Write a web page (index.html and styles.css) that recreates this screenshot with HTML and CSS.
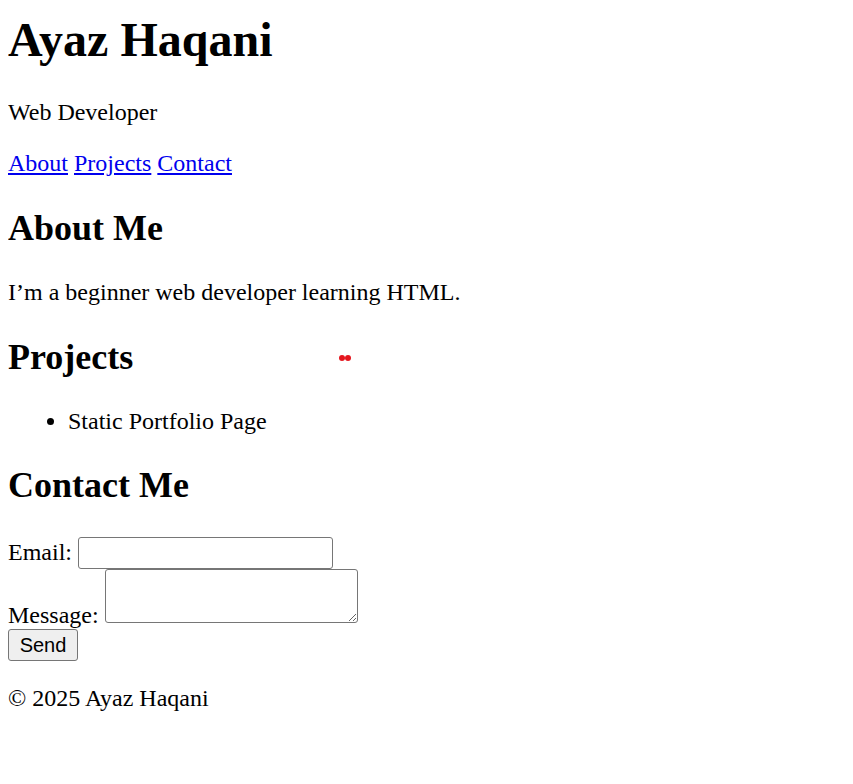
FILE: index.html
```html
<!DOCTYPE html>
<html lang="en">
<head>
<meta charset="utf-8">
<title>Ayaz Haqani</title>
<link rel="stylesheet" href="styles.css">
</head>
<body>
<header class="site-header">
  <h1 class="title">Ayaz Haqani</h1>
  <p class="text">Web Developer</p>
  <nav class="nav">
    <a href="#about" class="link">About</a>
    <a href="#projects" class="link">Projects</a>
    <a href="#contact" class="link">Contact</a>
  </nav>
</header>
<main>
  <section id="about">
    <h2 class="heading">About Me</h2>
    <p class="text">I’m a beginner web developer learning HTML.</p>
  </section>
  <section id="projects" class="projects">
    <h2 class="heading">Projects</h2>
    <span class="dots"><span class="dot"></span><span class="dot"></span></span>
    <ul class="list">
      <li>Static Portfolio Page</li>
    </ul>
  </section>
  <section id="contact">
    <h2 class="heading">Contact Me</h2>
    <form class="form">
      <label for="email">Email:</label>
      <input id="email" type="email" class="field-input"><br>
      <label for="msg">Message:</label>
      <textarea id="msg" class="field-area"></textarea><br>
      <button type="button" class="send">Send</button>
    </form>
  </section>
</main>
<footer>
  <p class="text">© 2025 Ayaz Haqani</p>
</footer>
</body>
</html>
```
FILE: styles.css
```css
html {
  font-family: "Liberation Serif", "Times New Roman", serif;
  font-size: 24px;
  color: #000;
  background: #fff;
}
body {
  margin: 0 8px 8px;
}
.title {
  font-size: 48px;
  font-weight: bold;
  margin: 12px 0 32px;
}
.text {
  margin: 24px 0;
}
.nav {
  margin: 24px 0;
}
.link {
  color: #0000ee;
  text-decoration: underline;
}
.heading {
  font-size: 36px;
  font-weight: bold;
  margin: 0.83em 0;
}
.projects {
  position: relative;
}
.dots {
  position: absolute;
  left: 331px;
  top: 19px;
  display: flex;
}
.dot {
  width: 6px;
  height: 6px;
  border-radius: 50%;
  background: #e5161e;
}
.list {
  margin: 24px 0;
  padding-left: 60px;
}
.form {
  margin: 0;
  padding-top: 1px;
}
.field-input {
  box-sizing: border-box;
  width: 255px;
  height: 32px;
  margin: 0;
  border: 1px solid #767676;
  border-radius: 3px;
  font-size: 20px;
  padding: 1px 3px;
  vertical-align: baseline;
}
.field-area {
  box-sizing: border-box;
  width: 253px;
  height: 54px;
  margin: 0;
  border: 1px solid #767676;
  border-radius: 3px;
  font-size: 20px;
  padding: 3px;
}
.send {
  box-sizing: border-box;
  width: 70px;
  height: 32px;
  margin: 0;
  font-family: "Liberation Sans", Arial, sans-serif;
  font-size: 20px;
  background: #efefef;
  border: 1px solid #767676;
  border-radius: 3px;
  padding: 0 8px;
  color: #000;
}
```
